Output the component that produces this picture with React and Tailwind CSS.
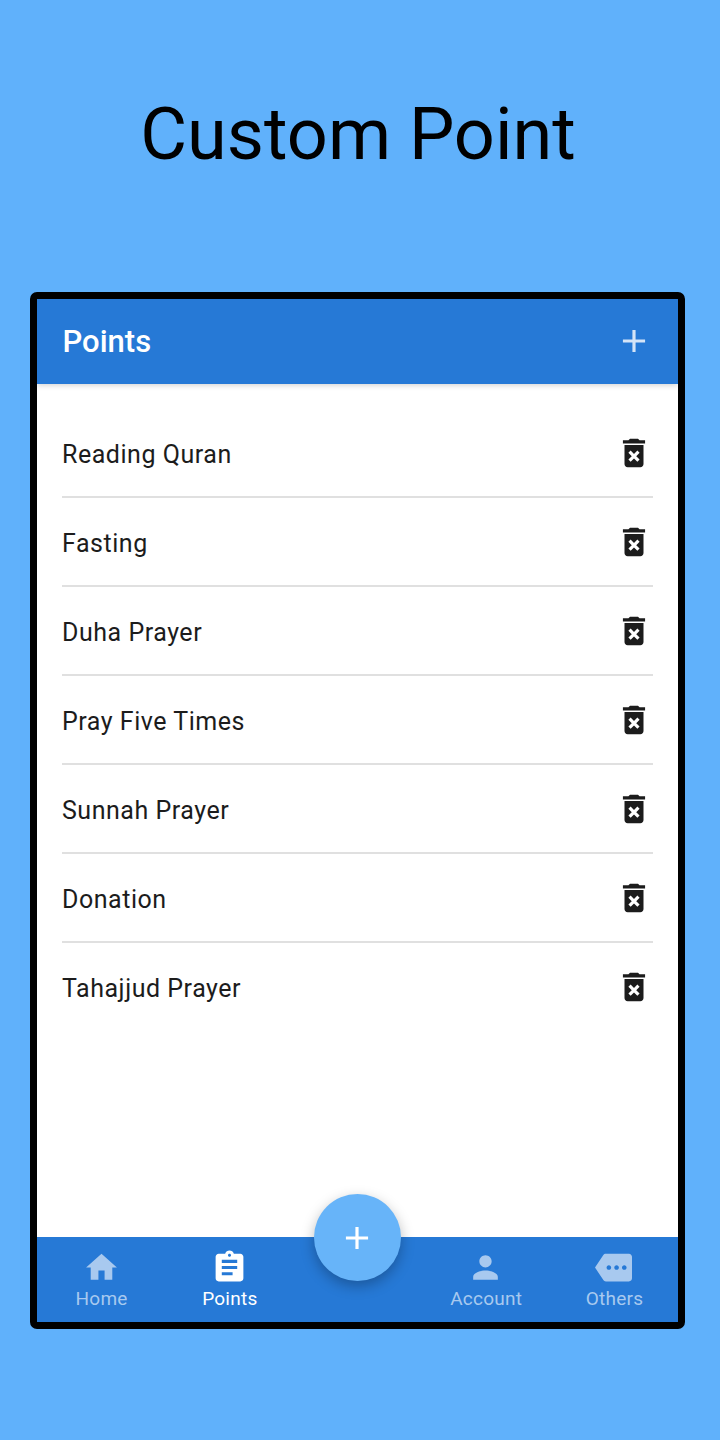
import { MdAdd, MdHome } from "react-icons/md";

const points = [
  "Reading Quran",
  "Fasting",
  "Duha Prayer",
  "Pray Five Times",
  "Sunnah Prayer",
  "Donation",
  "Tahajjud Prayer",
];

const DeleteIcon = ({ className }) => (
  <svg viewBox="0 0 24 24" fill="currentColor" className={className}>
    <path d="M6 19c0 1.1.9 2 2 2h8c1.1 0 2-.9 2-2V7H6v12zm2.46-7.12l1.41-1.41L12 12.59l2.12-2.12 1.41 1.41L13.41 14l2.12 2.12-1.41 1.41L12 15.41l-2.12 2.12-1.41-1.41L10.59 14l-2.13-2.12zM15.5 4l-1-1h-5l-1 1H5v2h14V4z" />
  </svg>
);

const AssignmentIcon = ({ className }) => (
  <svg viewBox="0 0 24 24" fill="currentColor" className={className}>
    <path d="M19 3h-4.18C14.4 1.84 13.3 1 12 1c-1.3 0-2.4.84-2.82 2H5c-1.1 0-2 .9-2 2v14c0 1.1.9 2 2 2h14c1.1 0 2-.9 2-2V5c0-1.1-.9-2-2-2zm-7 0c.55 0 1 .45 1 1s-.45 1-1 1-1-.45-1-1 .45-1 1-1zm2 14H7v-2h7v2zm3-4H7v-2h10v2zm0-4H7V7h10v2z" />
  </svg>
);

const PersonIcon = ({ className }) => (
  <svg viewBox="0 0 24 24" fill="currentColor" className={className}>
    <path d="M12 12c2.21 0 4-1.79 4-4s-1.79-4-4-4-4 1.79-4 4 1.79 4 4 4zm0 2c-2.67 0-8 1.34-8 4v2h16v-2c0-2.66-5.33-4-8-4z" />
  </svg>
);

const MoreIcon = ({ className }) => (
  <svg viewBox="0 0 24 24" fill="currentColor" className={className}>
    <path d="M22 3H7c-.69 0-1.23.35-1.59.88L0 12l5.41 8.11c.36.53.9.89 1.59.89h15c1.1 0 2-.9 2-2V5c0-1.1-.9-2-2-2zM9 13.5c-.83 0-1.5-.67-1.5-1.5s.67-1.5 1.5-1.5 1.5.67 1.5 1.5-.67 1.5-1.5 1.5zm5 0c-.83 0-1.5-.67-1.5-1.5s.67-1.5 1.5-1.5 1.5.67 1.5 1.5-.67 1.5-1.5 1.5zm5 0c-.83 0-1.5-.67-1.5-1.5s.67-1.5 1.5-1.5 1.5.67 1.5 1.5-.67 1.5-1.5 1.5z" />
  </svg>
);

const NavItem = ({ icon: Icon, label, active }) => (
  <button
    type="button"
    className={`flex flex-1 flex-col items-center pt-[12px] ${active ? "text-white" : "text-[#a8c9ef]"}`}
  >
    <Icon className="h-[37px] w-[37px]" />
    <span className="pl-[1px] text-[19px] leading-[26px] tracking-[0.25px]">{label}</span>
  </button>
);

const App = () => {
  return (
    <div className="flex h-[1440px] w-[720px] flex-col bg-[#60b1fb] font-[Roboto,sans-serif]">
      <h1 className="h-[292px] pt-[93px] pr-[4px] text-center text-[72px] leading-[84px] text-black">
        Custom Point
      </h1>

      <div className="ml-[30px] flex h-[1037px] w-[655px] flex-col rounded-[7px] border-[7px] border-black bg-white">
        <header className="flex h-[85px] items-center justify-between bg-[#2679d6] pr-[25px] pb-px pl-[25.5px] shadow-[0_1px_6px_rgba(0,0,0,0.2)]">
          <h2 className="pt-[3px] text-[31px] font-medium text-white">Points</h2>
          <MdAdd className="h-[38px] w-[38px] text-[#d4e4f7]" />
        </header>

        <ul className="flex-1 px-[25px] pt-[25px]">
          {points.map((point) => (
            <li
              key={point}
              className="flex h-[89px] items-center justify-between border-b-2 border-[#e0e0e0] text-[#1c1c1c] last:border-transparent"
            >
              <span className="pt-[5px] text-[25px] tracking-[0.53px]">{point}</span>
              <DeleteIcon className="h-[38px] w-[38px]" />
            </li>
          ))}
        </ul>

        <nav className="relative flex h-[85px] bg-[#2679d6]">
          <NavItem icon={MdHome} label="Home" />
          <NavItem icon={AssignmentIcon} label="Points" active />
          <div className="flex-1" />
          <NavItem icon={PersonIcon} label="Account" />
          <NavItem icon={MoreIcon} label="Others" />
          <button
            type="button"
            className="absolute -top-[43px] left-[277px] flex h-[87px] w-[87px] items-center justify-center rounded-full bg-[#67b4f9] pr-px text-white shadow-[0_5px_14px_rgba(0,0,0,0.28)]"
          >
            <MdAdd className="h-[38px] w-[38px]" />
          </button>
        </nav>
      </div>
    </div>
  );
};

export default App;
